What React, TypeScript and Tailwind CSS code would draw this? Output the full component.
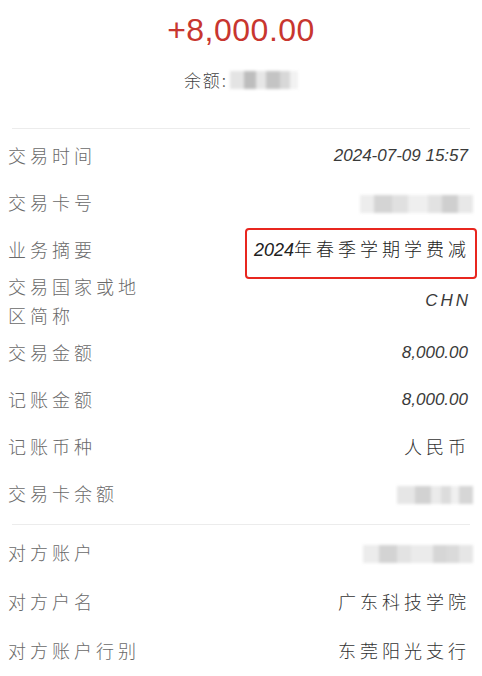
import React from "react";

const cjk = { fontFamily: '"Noto Sans CJK SC", "Noto Sans", sans-serif' };
const num = { fontFamily: '"Liberation Sans", "Noto Sans CJK SC", sans-serif' };

function Mosaic({ cells }: { cells: { w: number; c: string }[] }) {
  return (
    <div className="flex h-[18px] blur-[1.5px]">
      {cells.map((cell, i) => (
        <div key={i} style={{ width: cell.w, backgroundColor: cell.c }} className="h-full" />
      ))}
    </div>
  );
}

function Label({ children }: { children: React.ReactNode }) {
  return (
    <div className="w-[134px] shrink-0 text-[18px] leading-[29px] tracking-[4px] text-[#6a6a6a] font-light" style={cjk}>
      {children}
    </div>
  );
}

function Row({ label, children, h = "h-[47px]" }: { label: React.ReactNode; children: React.ReactNode; h?: string }) {
  return (
    <div className={`flex items-center justify-between ${h}`}>
      <Label>{label}</Label>
      <div className="flex items-center justify-end whitespace-nowrap">{children}</div>
    </div>
  );
}

function CjkValue({ children }: { children: React.ReactNode }) {
  return (
    <span className="text-[18px] tracking-[4px] -mr-[2px] text-[#333] font-light" style={cjk}>
      {children}
    </span>
  );
}

function NumValue({ children }: { children: React.ReactNode }) {
  return (
    <span className="text-[17px] italic text-[#3a3a3a]" style={num}>
      {children}
    </span>
  );
}

export default function App() {
  return (
    <div className="w-[482px] h-[676px] bg-white overflow-hidden">
      <div className="flex h-[60px] items-center justify-center">
        <span className="text-[32px] tracking-[0.5px] text-[#c8362f]" style={num}>
          +8,000.00
        </span>
      </div>
      <div className="flex h-[40px] items-center justify-center">
        <span className="text-[17px] tracking-[2px] text-[#444] font-light" style={cjk}>余额:</span>
        <div className="ml-[2px]">
          <Mosaic
            cells={[
              { w: 14, c: "#e4e4e4" },
              { w: 12, c: "#bdbdbd" },
              { w: 10, c: "#e6e6e6" },
              { w: 14, c: "#c4c4c4" },
              { w: 10, c: "#d8d8d8" },
              { w: 8, c: "#f2f2f2" },
            ]}
          />
        </div>
      </div>
      <div className="mx-[12px] mt-[28px] h-px bg-[#ececec]" />
      <div className="pl-[8px] pr-[14px] pt-[3px]">
        <Row label="交易时间">
          <NumValue>2024-07-09 15:57</NumValue>
        </Row>
        <Row label="交易卡号">
          <div className="-mr-[5px] mt-[3px]">
            <Mosaic
              cells={[
                { w: 14, c: "#ededed" },
                { w: 18, c: "#d4d4d4" },
                { w: 16, c: "#e0e0e0" },
                { w: 20, c: "#efefef" },
                { w: 14, c: "#e2e2e2" },
                { w: 16, c: "#cfcfcf" },
                { w: 15, c: "#e8e8e8" },
              ]}
            />
          </div>
        </Row>
        <Row label="业务摘要">
          <div className="relative flex h-[27px] items-center">
            <span className="text-[18px] leading-[27px] tracking-[4px] -mr-[2px] text-[#222] font-light" style={cjk}>
              <span className="tracking-[0px] italic" style={num}>2024</span>年春季学期学费减
            </span>
            <div className="absolute -left-[9px] -right-[9px] -top-[8px] -bottom-[16px] border-2 border-[#e8261f] rounded-[4px]" />
          </div>
        </Row>
        <Row label="交易国家或地区简称" h="h-[56px]">
          <span className="text-[17px] italic tracking-[3px] -mr-[3px] text-[#3a3a3a]" style={num}>
            CHN
          </span>
        </Row>
        <Row label="交易金额">
          <NumValue>8,000.00</NumValue>
        </Row>
        <Row label="记账金额">
          <NumValue>8,000.00</NumValue>
        </Row>
        <Row label="记账币种">
          <CjkValue>人民币</CjkValue>
        </Row>
        <Row label="交易卡余额">
          <div className="-mr-[5px] mt-[3px]">
            <Mosaic
              cells={[
                { w: 18, c: "#e6e6e6" },
                { w: 16, c: "#d2d2d2" },
                { w: 10, c: "#ebebeb" },
                { w: 10, c: "#dcdcdc" },
                { w: 8, c: "#f0f0f0" },
                { w: 14, c: "#d6d6d6" },
              ]}
            />
          </div>
        </Row>
      </div>
      <div className="mx-[12px] mt-[7px] mb-[3px] h-px bg-[#ececec]" />
      <div className="pl-[8px] pr-[14px]">
        <Row label="对方账户" h="h-[49px]">
          <div className="-mr-[5px] mt-[2px]">
            <Mosaic
              cells={[
                { w: 16, c: "#ececec" },
                { w: 18, c: "#d3d3d3" },
                { w: 14, c: "#e3e3e3" },
                { w: 22, c: "#ebebeb" },
                { w: 14, c: "#d6d6d6" },
                { w: 12, c: "#dadada" },
                { w: 14, c: "#e6e6e6" },
              ]}
            />
          </div>
        </Row>
        <Row label="对方户名" h="h-[49px]">
          <CjkValue>广东科技学院</CjkValue>
        </Row>
        <Row label="对方账户行别" h="h-[49px]">
          <CjkValue>东莞阳光支行</CjkValue>
        </Row>
      </div>
    </div>
  );
}
